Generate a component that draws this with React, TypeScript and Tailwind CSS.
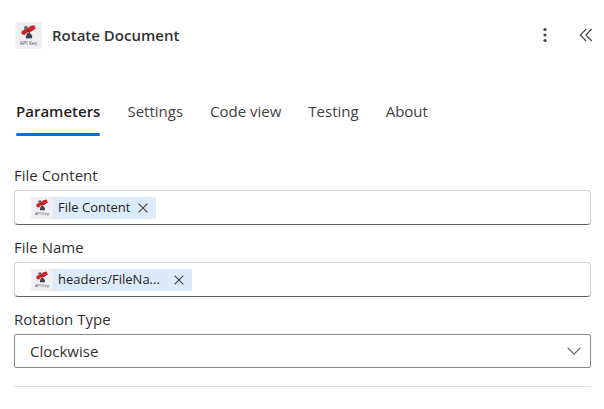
import { useState } from 'react';

const tabs = ['Parameters', 'Settings', 'Code view', 'Testing', 'About'];

const fields = [
  { id: 'file-content', label: 'File Content', token: 'File Content' },
  { id: 'file-name', label: 'File Name', token: 'headers/FileNa...' },
];

function ConnectorIcon({ className }: { className: string }) {
  return (
    <svg viewBox="0 0 27 27" className={className} aria-hidden="true">
      <rect width="27" height="27" rx="1.5" fill="#eeeff1" />
      <path d="M9 5l1.8-1.4 1.6.6.8 3-1.8 1.6L9 7.6z" fill="#686c77" />
      <path d="M12.4 11l2.4-.2 2.2 2.8.2 2.6-6 .2-.4-2z" fill="#3d4350" />
      <path d="M6.4 10.8l.6-2.4 4.2-.6 4-3.8 4.2-.8 1.2 3.6-4.6 3-3.4.4-3 2.8-2.4-.6z" fill="#cf2229" />
      <path d="M11.4 7.4l3.2 3.4" stroke="#8f1a24" strokeWidth="1.2" />
      <text x="13.5" y="22.6" textAnchor="middle" fontSize="4.8" fontFamily="Liberation Sans, sans-serif" fill="#555965">
        API Key
      </text>
    </svg>
  );
}

function TokenField({ id, label, token }: { id: string; label: string; token: string }) {
  const [visible, setVisible] = useState(true);

  return (
    <div className="flex flex-col gap-[3px]">
      <label htmlFor={id} className="text-[15px] leading-6 text-[#323130]">{label}</label>
      <div className="flex h-[35px] items-center rounded border border-[#d1d1d1] border-b-[#616161] px-4">
        {visible && (
          <span className="flex h-[22px] shrink-0 items-center overflow-hidden rounded-xs bg-[#dbebf9] text-[13px] text-[#242424]">
            <ConnectorIcon className="size-[22px]" />
            <span className={token.endsWith('...') ? 'w-[113px] pl-[5px]' : 'pl-[5px]'}>{token}</span>
            <button
              type="button"
              aria-label={`Remove ${label}`}
              onClick={() => setVisible(false)}
              className="flex h-full w-[26px] items-center justify-center"
            >
              <svg viewBox="0 0 10 10" className="size-[10px]" fill="none" stroke="#424242" strokeWidth="1.1">
                <path d="M.6.6l8.8 8.8M9.4.6L.6 9.4" />
              </svg>
            </button>
          </span>
        )}
        <input id={id} type="text" className="min-w-0 flex-1 bg-transparent px-1 text-[15px] outline-none" />
      </div>
    </div>
  );
}

export default function App() {
  const [active, setActive] = useState('Parameters');

  return (
    <main className="bg-white pt-[21px] font-['Open_Sans','Noto_Sans',sans-serif] text-[#323130]">
      <header className="flex h-7 items-center pr-[7px] pl-[15px]">
        <ConnectorIcon className="size-[27px]" />
        <h1 className="ml-[10px] flex-1 text-[15px] font-semibold text-[#323130]">Rotate Document</h1>
        <button type="button" aria-label="More commands" className="flex size-6 items-center justify-center">
          <svg viewBox="0 0 4 16" className="h-4 w-1" fill="#424242">
            <circle cx="2" cy="2.5" r="1.6" />
            <circle cx="2" cy="8" r="1.6" />
            <circle cx="2" cy="13.5" r="1.6" />
          </svg>
        </button>
        <button type="button" aria-label="Collapse panel" className="ml-[18px] flex h-6 w-[22px] items-center justify-center">
          <svg viewBox="0 0 14 14" className="size-[14px]" fill="none" stroke="#424242" strokeWidth="1.1">
            <path d="M7.2 1L1.2 7l6 6M12.8 1l-6 6 6 6" />
          </svg>
        </button>
      </header>

      <nav role="tablist" className="mt-[50px] flex gap-[27px] px-4">
        {tabs.map((tab) => (
          <button
            key={tab}
            type="button"
            role="tab"
            aria-selected={tab === active}
            onClick={() => setActive(tab)}
            className={
              tab === active
                ? 'flex flex-col text-[15px] leading-6 font-semibold text-[#242424]'
                : 'flex flex-col text-[15px] leading-6 text-[#424242]'
            }
          >
            {tab}
            {tab === active && <span className="mt-[10px] h-[3px] w-full rounded-full bg-[#0f6cde]" />}
          </button>
        ))}
      </nav>

      <form className="mt-[27px] mr-[13px] ml-[14px] flex flex-col gap-[10px] border-b border-[#e0e0e0] pb-[18px]">
        {fields.map((field) => (
          <TokenField key={field.id} {...field} />
        ))}
        <div className="flex flex-col gap-[3px]">
          <label htmlFor="rotation-type" className="text-[15px] leading-6">Rotation Type</label>
          <div className="relative">
            <select
              id="rotation-type"
              defaultValue="Clockwise"
              className="h-[34px] w-full appearance-none rounded-xs border border-[#8a8886] bg-white px-[15px] text-[15px] text-[#323130]"
            >
              <option>Clockwise</option>
              <option>Counterclockwise</option>
            </select>
            <svg
              viewBox="0 0 14 8"
              className="pointer-events-none absolute top-[13px] right-[10px] h-2 w-[14px]"
              fill="none"
              stroke="#605e5c"
              strokeWidth="1.1"
            >
              <path d="M.6.7L7 7.1 13.4.7" />
            </svg>
          </div>
        </div>
      </form>
    </main>
  );
}
